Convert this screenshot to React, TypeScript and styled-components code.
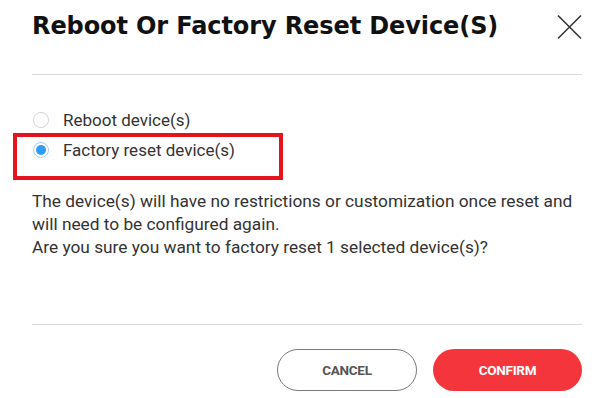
import React, { useState } from "react";
import styled, { createGlobalStyle } from "styled-components";

const GlobalStyle = createGlobalStyle`
  html, body {
    margin: 0;
    padding: 0;
    background: #ffffff;
  }
  body {
    font-family: Roboto, "Liberation Sans", sans-serif;
  }
`;

const Dialog = styled.div`
  width: 595px;
  height: 398px;
  box-sizing: border-box;
  padding: 0 13px 0 32px;
  background: #ffffff;
  display: flex;
  flex-direction: column;
`;

const Header = styled.div`
  height: 75px;
  display: flex;
  align-items: flex-start;
  justify-content: space-between;
  border-bottom: 1px solid #d9d9d9;
  box-sizing: border-box;
  padding-top: 11px;
`;

const Title = styled.h1`
  margin: 0;
  font-family: "DejaVu Sans", Lato, sans-serif;
  font-weight: 700;
  font-size: 24px;
  line-height: 30px;
  letter-spacing: -0.1px;
  color: #111;
`;

const CloseButton = styled.button`
  border: none;
  background: none;
  padding: 0;
  width: 25px;
  height: 24px;
  margin-top: 4px;
  cursor: pointer;
  display: flex;
  align-items: center;
  justify-content: center;
`;

const Body = styled.div`
  flex: 1;
  padding-top: 37px;
  border-bottom: 1px solid #d9d9d9;
`;

const Options = styled.div`
  display: flex;
  flex-direction: column;
  gap: 14px;
`;

const OptionRow = styled.label<{ $highlighted?: boolean }>`
  position: relative;
  display: flex;
  align-items: center;
  gap: 14px;
  height: 16px;
  font-size: 17px;
  color: #333;
  cursor: pointer;

  ${({ $highlighted }) =>
    $highlighted &&
    `
    &::after {
      content: "";
      position: absolute;
      left: -19px;
      top: -9px;
      width: 270px;
      height: 47px;
      box-sizing: border-box;
      border: 4px solid #e5131d;
      pointer-events: none;
    }
  `}
`;

const RadioCircle = styled.span<{ $checked?: boolean }>`
  width: 16px;
  height: 16px;
  box-sizing: border-box;
  margin-left: 1px;
  border-radius: 50%;
  border: 1px solid ${({ $checked }) => ($checked ? "#9fd0fb" : "#d4d4d4")};
  display: flex;
  align-items: center;
  justify-content: center;

  &::before {
    content: "";
    width: 10px;
    height: 10px;
    border-radius: 50%;
    background: ${({ $checked }) => ($checked ? "#2e9bf5" : "transparent")};
  }
`;

const Message = styled.p`
  margin: 32px 0 0;
  font-size: 17.3px;
  line-height: 23px;
  color: #333;
`;

const Footer = styled.div`
  height: 73px;
  display: flex;
  align-items: flex-start;
  justify-content: flex-end;
  gap: 16px;
  padding-top: 24px;
  box-sizing: border-box;
`;

const PillButton = styled.button<{ $primary?: boolean }>`
  height: 42px;
  width: ${({ $primary }) => ($primary ? "149px" : "140px")};
  border-radius: 21px;
  font-family: Roboto, "Liberation Sans", sans-serif;
  font-weight: 700;
  font-size: 13.5px;
  letter-spacing: -0.3px;
  cursor: pointer;
  border: ${({ $primary }) => ($primary ? "none" : "1.5px solid #7a7a7a")};
  background: ${({ $primary }) => ($primary ? "#f4363c" : "#ffffff")};
  color: ${({ $primary }) => ($primary ? "#ffffff" : "#555")};
`;

const options = [
  { id: "reboot", label: "Reboot device(s)" },
  { id: "factory", label: "Factory reset device(s)" },
];

export default function App() {
  const [selected, setSelected] = useState("factory");

  return (
    <>
      <GlobalStyle />
      <Dialog>
        <Header>
          <Title>Reboot Or Factory Reset Device(S)</Title>
          <CloseButton aria-label="close">
            <svg width="25" height="24" viewBox="0 0 25 24">
              <path d="M1 0.5 L24 23.5 M24 0.5 L1 23.5" stroke="#333" strokeWidth="1.5" fill="none" />
            </svg>
          </CloseButton>
        </Header>
        <Body>
          <Options>
            {options.map((o) => (
              <OptionRow
                key={o.id}
                $highlighted={o.id === "factory"}
                onClick={() => setSelected(o.id)}
              >
                <RadioCircle $checked={selected === o.id} />
                {o.label}
              </OptionRow>
            ))}
          </Options>
          <Message>
            The device(s) will have no restrictions or customization once reset and
            will need to be configured again.
            <br />
            Are you sure you want to factory reset 1 selected device(s)?
          </Message>
        </Body>
        <Footer>
          <PillButton>CANCEL</PillButton>
          <PillButton $primary>CONFIRM</PillButton>
        </Footer>
      </Dialog>
    </>
  );
}
